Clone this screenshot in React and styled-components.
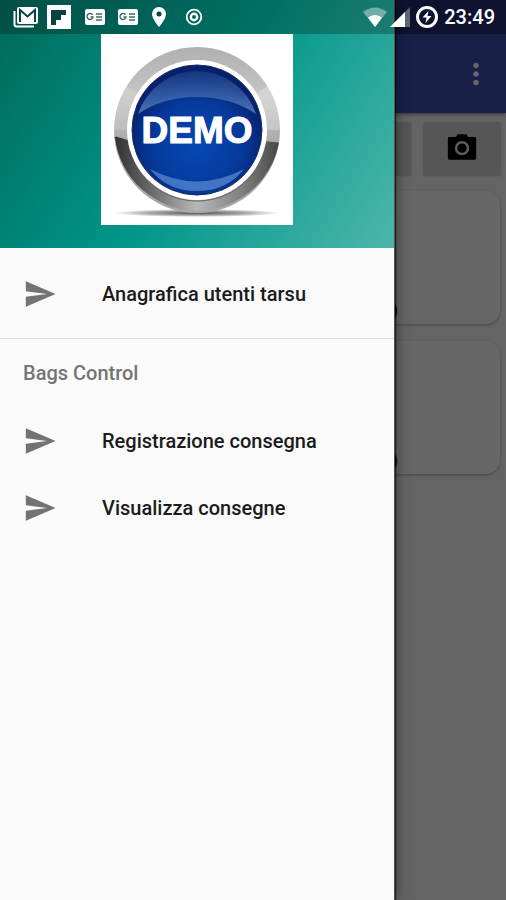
import React from 'react';
import styled, { createGlobalStyle } from 'styled-components';

const GlobalStyle = createGlobalStyle`
  * {
    box-sizing: border-box;
  }

  body {
    margin: 0;
    background: #fafafa;
    font-family: Roboto, 'Noto Sans', sans-serif;
  }
`;

const Screen = styled.div`
  position: relative;
  min-height: 100vh;
  overflow: hidden;
`;

const Toolbar = styled.header`
  display: flex;
  align-items: center;
  justify-content: flex-end;
  height: 113px;
  padding: 34px 13px 0 0;
  background: linear-gradient(#303f9f 34px, #3f51b5 34px);
  box-shadow: 0 1px 4px rgba(0, 0, 0, 0.5);
`;

const IconButton = styled.button`
  display: flex;
  padding: 0;
  border: 0;
  background: none;
  color: #fff;
`;

const Actions = styled.div`
  display: flex;
  gap: 12px;
  padding: 9px 5px 0;
`;

const ActionButton = styled.button`
  display: flex;
  align-items: center;
  justify-content: center;
  flex: ${({ $wide }) => ($wide ? '1' : '0 0 78px')};
  height: 53px;
  padding: 0 0 4px;
  border: 0;
  border-radius: 2px;
  background: #d6d7d7;
  color: #000;
  box-shadow: 0 1px 2px rgba(0, 0, 0, 0.2);
`;

const Cards = styled.div`
  display: flex;
  flex-direction: column;
  gap: 17px;
  padding: 16px 6px;
`;

const Card = styled.article`
  display: flex;
  align-items: flex-end;
  justify-content: flex-end;
  height: 133px;
  padding: 0 102px 2px 16px;
  border-radius: 14px;
  background: #fff;
  box-shadow: 0 1px 3px rgba(0, 0, 0, 0.3);
  font-size: 20px;
  font-weight: 700;
  line-height: 24px;
`;

const Scrim = styled.div`
  position: absolute;
  inset: 0;
  background: rgba(0, 0, 0, 0.6);
`;

const Drawer = styled.aside`
  position: absolute;
  top: 0;
  bottom: 0;
  left: 0;
  width: calc(100% - 111px);
  background: #fafafa;
  border-right: 1px solid #555;
  box-shadow: 1px 0 1px rgba(0, 0, 0, 0.6), 2px 0 12px rgba(0, 0, 0, 0.4);
`;

const DrawerHeader = styled.div`
  display: flex;
  justify-content: center;
  height: 248px;
  padding-top: 34px;
  background: linear-gradient(302deg, #4db6ac, #009688 50%, #00695c);
`;

const Emblem = styled.svg`
  width: 192px;
  height: 191px;
  background: #fff;
`;

const EmblemText = styled.text`
  fill: #fff;
  stroke: #fff;
  stroke-width: 1px;
  font-family: 'Liberation Sans Narrow', 'Liberation Sans', sans-serif;
  font-size: 37px;
  font-weight: 700;
  text-anchor: middle;
`;

const Menu = styled.nav`
  padding-top: 12px;
`;

const MenuItem = styled.a`
  display: flex;
  align-items: center;
  gap: 45px;
  height: 67px;
  padding: 0 23px;
  color: #1b1b1b;
  font-size: 20px;
  font-weight: 500;
  line-height: 24px;
  text-decoration: none;

  svg {
    color: #737373;
  }
`;

const Group = styled.section`
  margin-top: 11px;
  border-top: 1px solid #dedede;
`;

const GroupTitle = styled.h2`
  display: flex;
  align-items: center;
  height: 68px;
  margin: 0;
  padding: 0 23px;
  color: #747474;
  font-size: 20px;
  font-weight: 500;
  line-height: 24px;
`;

const StatusBar = styled.div`
  position: absolute;
  top: 0;
  left: 0;
  right: 0;
  display: flex;
  align-items: center;
  justify-content: space-between;
  height: 34px;
  padding: 0 11px 0 13px;
  background: rgba(0, 0, 0, 0.25);
  color: #fff;
`;

const StatusGroup = styled.div`
  display: flex;
  align-items: center;
  gap: ${({ $gap }) => $gap}px;
`;

const Clock = styled.time`
  font-size: 20px;
  font-weight: 500;
  line-height: 36px;
`;

const Icon = ({ size = 34, d }) => (
  <svg width={size} height={size} viewBox="0 0 24 24" fill="currentColor" aria-hidden="true">
    <path d={d} />
  </svg>
);

const paths = {
  send: 'M2.01 21L23 12 2.01 3 2 10l15 2-15 2z',
  more:
    'M12 8c1.1 0 2-.9 2-2s-.9-2-2-2-2 .9-2 2 .9 2 2 2zm0 2c-1.1 0-2 .9-2 2s.9 2 2 2 2-.9 2-2-.9-2-2-2zm0 6c-1.1 0-2 .9-2 2s.9 2 2 2 2-.9 2-2-.9-2-2-2z',
};

const CameraIcon = () => (
  <svg width="34" height="34" viewBox="0 0 24 24" aria-hidden="true">
    <path
      d="M9 3L7.500 5H3q-1 0-1 1v14q0 1 1 1h18q1 0 1-1V6q0-1-1-1h-4.500L15 3z"
      fill="currentColor"
    />
    <circle cx="12" cy="12.800" r="4.200" fill="none" stroke="#fff" strokeWidth="1.800" opacity="0.9" />
  </svg>
);

const MailIcon = () => (
  <svg width="26" height="22" viewBox="0 0 26 22" aria-hidden="true">
    <path d="M1.500 5v13.500q0 2 2 2H21" fill="none" stroke="#fff" strokeWidth="2" />
    <rect x="4" y="1" width="21" height="17" rx="2" fill="#fff" />
    <path d="M7 16V4l7.500 6.500L22 4v12" fill="none" stroke="#07423b" strokeWidth="2" />
  </svg>
);

const BoardIcon = () => (
  <svg width="26" height="26" viewBox="0 0 26 26" aria-hidden="true">
    <rect x="1" y="1" width="24" height="24" fill="#fff" />
    <path d="M5 6h15v5h-5v5h-5v5H5z" fill="#07423b" />
  </svg>
);

const NewsIcon = () => (
  <svg width="22" height="18" viewBox="0 0 22 18" aria-hidden="true">
    <rect x="1" y="1" width="20" height="16" rx="2" fill="#fff" />
    <path
      d="M8.500 6.800A3 3 0 1 0 9 9H6.500M12 6h6M12 9h6M12 12h6"
      fill="none"
      stroke="#3d6e68"
      strokeWidth="1.500"
    />
  </svg>
);

const PinIcon = () => (
  <svg width="16" height="22" viewBox="0 0 16 22" aria-hidden="true">
    <path d="M8 1a7 7 0 0 0-7 7c0 5 7 13 7 13s7-8 7-13a7 7 0 0 0-7-7z" fill="#fff" />
    <circle cx="8" cy="8" r="2.500" fill="#07423b" />
  </svg>
);

const TargetIcon = () => (
  <svg width="18" height="18" viewBox="0 0 18 18" aria-hidden="true">
    <circle cx="9" cy="9" r="7.300" fill="none" stroke="#fff" strokeWidth="1.800" />
    <circle cx="9" cy="9" r="3.200" fill="none" stroke="#fff" strokeWidth="2.400" />
  </svg>
);

const WifiIcon = () => (
  <svg width="26" height="20" viewBox="0 0 26 20" aria-hidden="true">
    <path d="M1 5q12-9 24 0L13 20z" fill="#fff" opacity="0.4" />
    <path d="M6 10.500q7-5 14 0L13 20z" fill="#fff" />
  </svg>
);

const SignalIcon = () => (
  <svg width="20" height="20" viewBox="0 0 20 20" aria-hidden="true">
    <path d="M0 20L20 0v20z" fill="#fff" opacity="0.35" />
    <path d="M0 20L15 5v15z" fill="#fff" />
  </svg>
);

const BatteryIcon = () => (
  <svg width="24" height="24" viewBox="0 0 24 24" aria-hidden="true">
    <circle cx="12" cy="12" r="9.500" fill="none" stroke="#fff" strokeWidth="3" />
    <path d="M13.500 6L7.500 12.500h4l-1 5.500 6-7h-4z" fill="#fff" />
  </svg>
);

const DemoEmblem = () => (
  <Emblem viewBox="0 0 192 191" role="img" aria-label="Demo">
    <defs>
      <linearGradient id="ringTop" x1="0" y1="0" x2="0" y2="1">
        <stop offset="0" stopColor="#b0b0b0" />
        <stop offset="0.3" stopColor="#c6c6c6" />
        <stop offset="0.6" stopColor="#a8a8a8" />
      </linearGradient>
      <linearGradient id="ringBottom" x1="0" y1="0" x2="1" y2="0">
        <stop offset="0" stopColor="#303030" />
        <stop offset="0.25" stopColor="#707070" />
        <stop offset="0.5" stopColor="#b8b8b8" />
        <stop offset="0.75" stopColor="#858585" />
        <stop offset="1" stopColor="#484848" />
      </linearGradient>
      <radialGradient id="ball" cx="0.5" cy="0.62" r="0.56">
        <stop offset="0" stopColor="#0648b4" />
        <stop offset="0.6" stopColor="#063a9c" />
        <stop offset="1" stopColor="#06206c" />
      </radialGradient>
      <linearGradient id="gloss" x1="0" y1="0" x2="0" y2="1">
        <stop offset="0" stopColor="#3c66a8" stopOpacity="0.3" />
        <stop offset="1" stopColor="#5d88c8" stopOpacity="0.8" />
      </linearGradient>
      <radialGradient id="floor">
        <stop offset="0" stopColor="#555" />
        <stop offset="0.6" stopColor="#aaa" />
        <stop offset="1" stopColor="#fff" />
      </radialGradient>
    </defs>
    <ellipse cx="96" cy="179" rx="83" ry="4" fill="url(#floor)" />
    <circle cx="96" cy="96" r="83" fill="url(#ringTop)" />
    <path d="M96 96L22 50A87 87 0 0 0 13 96z" fill="#fff" opacity="0.15" />
    <path d="M96 96L170 50A87 87 0 0 1 179 96z" fill="#fff" opacity="0.25" />
    <path
      d="M13 104L15 102.500L30 107L162 107L178 108.500A83 83 0 0 1 14 104z"
      fill="url(#ringBottom)"
    />
    <circle cx="96" cy="96" r="70" fill="#fff" />
    <path d="M38 137A71 71 0 0 0 154 137" fill="none" stroke="#666" strokeWidth="1" />
    <circle cx="96" cy="96" r="65" fill="url(#ball)" stroke="#142b62" strokeWidth="1" />
    <path d="M37 80A62 62 0 0 1 155 80Q130 63 96 63T37 80z" fill="url(#gloss)" />
    <path d="M49 135Q96 160 143 135Q126 157 96 157T49 135z" fill="#6c9be0" opacity="0.6" />
    <EmblemText x="96" y="109">
      DEMO
    </EmblemText>
  </Emblem>
);

const groupItems = ['Registrazione consegna', 'Visualizza consegne'];

const App = () => (
  <Screen>
    <GlobalStyle />
    <Toolbar>
      <IconButton type="button" aria-label="Altre opzioni">
        <Icon d={paths.more} />
      </IconButton>
    </Toolbar>
    <main>
      <Actions>
        <ActionButton type="button" $wide aria-label="Cerca" />
        <ActionButton type="button" aria-label="Fotocamera">
          <CameraIcon />
        </ActionButton>
      </Actions>
      <Cards>
        <Card>)</Card>
        <Card>)</Card>
      </Cards>
    </main>
    <Scrim />
    <Drawer>
      <DrawerHeader>
        <DemoEmblem />
      </DrawerHeader>
      <Menu>
        <MenuItem href="#anagrafica">
          <Icon d={paths.send} />
          Anagrafica utenti tarsu
        </MenuItem>
        <Group>
          <GroupTitle>Bags Control</GroupTitle>
          {groupItems.map(label => (
            <MenuItem key={label} href="#consegne">
              <Icon d={paths.send} />
              {label}
            </MenuItem>
          ))}
        </Group>
      </Menu>
    </Drawer>
    <StatusBar>
      <StatusGroup $gap={12}>
        <StatusGroup $gap={7}>
          <MailIcon />
          <BoardIcon />
        </StatusGroup>
        <StatusGroup $gap={11}>
          <NewsIcon />
          <NewsIcon />
        </StatusGroup>
        <StatusGroup $gap={18}>
          <PinIcon />
          <TargetIcon />
        </StatusGroup>
      </StatusGroup>
      <StatusGroup $gap={5}>
        <StatusGroup $gap={2}>
          <WifiIcon />
          <SignalIcon />
        </StatusGroup>
        <BatteryIcon />
        <Clock>23:49</Clock>
      </StatusGroup>
    </StatusBar>
  </Screen>
);

export default App;
